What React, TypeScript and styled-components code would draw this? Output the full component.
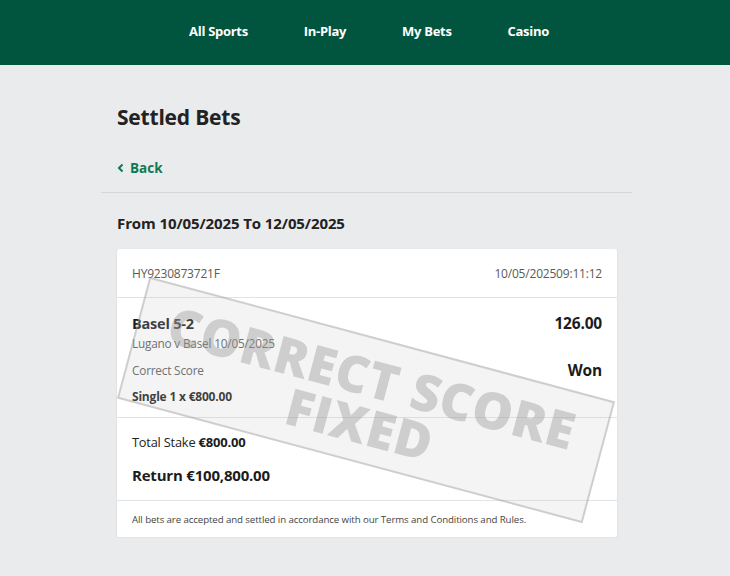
import styled, { createGlobalStyle } from 'styled-components';

const GlobalStyle = createGlobalStyle`
  html, body {
    margin: 0;
    padding: 0;
    background: #eaebed;
    font-family: "Open Sans", "Noto Sans", sans-serif;
    color: #1f1f1f;
  }
`;

const TopBar = styled.div`
  height: 65px;
  background: #01553f;
  display: flex;
  align-items: center;
  justify-content: center;
  gap: 56px;
  padding-left: 8px;
`;

const NavItem = styled.a`
  color: #ffffff;
  font-size: 13px;
  font-weight: 700;
  letter-spacing: -0.3px;
  text-decoration: none;
  margin-top: -4px;
`;

const Page = styled.div`
  width: 531px;
  margin: 0 0 0 101px;
`;

const Title = styled.h1`
  margin: 0;
  padding: 40px 16px 0;
  font-size: 21px;
  font-weight: 700;
  letter-spacing: -0.2px;
  color: #222;
  line-height: 24px;
`;

const BackLink = styled.a`
  display: flex;
  align-items: center;
  gap: 6px;
  padding: 28px 16px 0;
  height: 22px;
  color: #0b7a55;
  font-size: 13.5px;
  font-weight: 700;
  text-decoration: none;
`;

const Divider = styled.div`
  margin-top: 13px;
  border-top: 1px solid #d6d7d9;
`;

const Range = styled.div`
  padding: 20px 16px 0;
  font-size: 15px;
  font-weight: 700;
  color: #222;
  letter-spacing: -0.1px;
  line-height: 20px;
`;

const Card = styled.div`
  position: relative;
  overflow: hidden;
  margin: 16px 0 0 16px;
  width: 500px;
  background: #ffffff;
  border-radius: 3px;
  box-shadow: 0 1px 2px rgba(0, 0, 0, 0.12);
`;

const Section = styled.div<{ $pad: string }>`
  padding: ${(p) => p.$pad};
  border-bottom: 1px solid #e2e3e5;
  &:last-of-type {
    border-bottom: none;
  }
`;

const Row = styled.div<{ $top?: number }>`
  display: flex;
  justify-content: space-between;
  align-items: center;
  margin-top: ${(p) => p.$top ?? 0}px;
`;

const Muted = styled.span<{ $size?: number }>`
  color: #5a5a5a;
  font-size: ${(p) => p.$size ?? 11.8}px;
  letter-spacing: -0.2px;
`;

const Strong = styled.span<{ $size?: number }>`
  font-weight: 700;
  font-size: ${(p) => p.$size ?? 15}px;
  color: #1c1c1c;
  letter-spacing: -0.2px;
`;

const Line = styled.div<{ $top?: number }>`
  margin-top: ${(p) => p.$top ?? 0}px;
  line-height: 18px;
`;

const Plain = styled.span`
  font-size: 12.8px;
  color: #222;
  letter-spacing: -0.2px;
`;

const Footnote = styled.div`
  font-size: 9.7px;
  color: #444;
  letter-spacing: -0.1px;
`;

const Stamp = styled.div`
  position: absolute;
  left: 8px;
  top: 88px;
  width: 478px;
  height: 122px;
  transform: rotate(15deg);
  border: 2px solid rgba(150, 150, 150, 0.4);
  background: rgba(200, 200, 200, 0.2);
  display: flex;
  flex-direction: column;
  align-items: center;
  justify-content: center;
  pointer-events: none;
  font-family: "Open Sans", sans-serif;
  font-weight: 800;
  font-size: 51px;
  line-height: 48px;
  color: rgba(150, 150, 150, 0.4);
  letter-spacing: 0.5px;
`;

export default function App() {
  return (
    <>
      <GlobalStyle />
      <TopBar>
        <NavItem>All Sports</NavItem>
        <NavItem>In-Play</NavItem>
        <NavItem>My Bets</NavItem>
        <NavItem>Casino</NavItem>
      </TopBar>
      <Page>
        <Title>Settled Bets</Title>
        <BackLink>
          <svg width="7" height="10" viewBox="0 0 7 10">
            <path d="M5.5 1.5 L2 5 L5.5 8.5" stroke="#0b7a55" strokeWidth="2" fill="none" />
          </svg>
          Back
        </BackLink>
        <Divider />
        <Range>From 10/05/2025 To 12/05/2025</Range>
        <Card>
          <Section $pad="16px 15px 15px">
            <Row>
              <Muted $size={12}>HY9230873721F</Muted>
              <Muted $size={12}>10/05/202509:11:12</Muted>
            </Row>
          </Section>
          <Section $pad="14px 15px 11px">
            <Row>
              <Strong $size={14.5}>Basel 5-2</Strong>
              <Strong $size={15.5}>126.00</Strong>
            </Row>
            <Line $top={-1}>
              <Muted>Lugano v Basel 10/05/2025</Muted>
            </Line>
            <Row $top={7}>
              <Muted>Correct Score</Muted>
              <Strong $size={15.5}>Won</Strong>
            </Row>
            <Line $top={5}>
              <Strong $size={12}>Single 1 x €800.00</Strong>
            </Line>
          </Section>
          <Section $pad="14px 15px 16px">
            <Line>
              <Plain>Total Stake </Plain>
              <Strong $size={13}>€800.00</Strong>
            </Line>
            <Line $top={15}>
              <Strong $size={15}>Return €100,800.00</Strong>
            </Line>
          </Section>
          <Section $pad="12px 15px 11px">
            <Footnote>
              All bets are accepted and settled in accordance with our Terms and Conditions and Rules.
            </Footnote>
          </Section>
          <Stamp>
            <span>CORRECT SCORE</span>
            <span>FIXED</span>
          </Stamp>
        </Card>
      </Page>
    </>
  );
}
